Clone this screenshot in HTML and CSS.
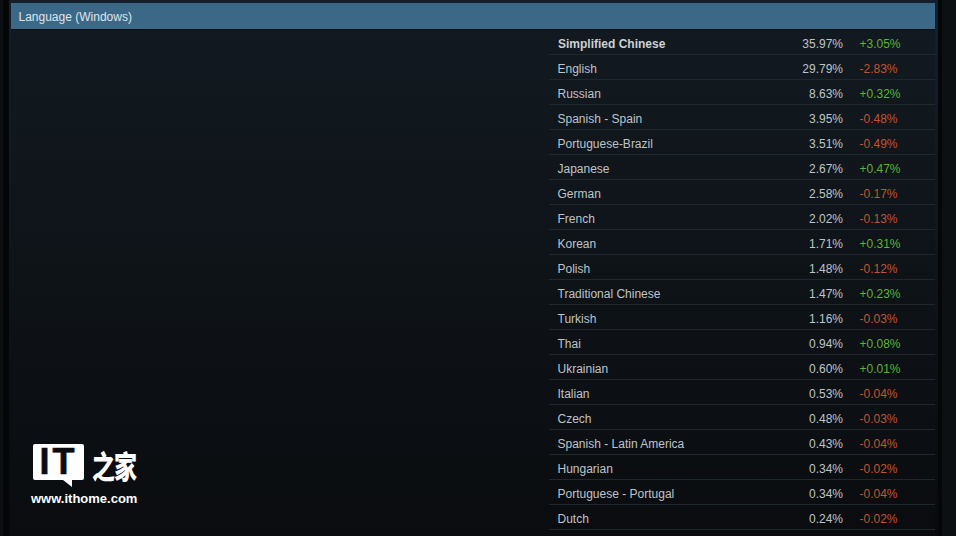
FILE: index.html
```html
<!DOCTYPE html>
<html lang="en">
<head>
<meta charset="utf-8">
<title>Language (Windows)</title>
<link rel="stylesheet" href="styles.css">
</head>
<body>
<div class="frame">
<main class="panel">
  <header class="panel-head">Language (Windows)</header>
  <section class="panel-body">
    <div class="logo">
      <div class="logo-mark">
        <div class="bubble"><span class="bubble-text">IT</span></div>
        <span class="logo-cn">之家</span>
      </div>
      <div class="logo-url">www.ithome.com</div>
    </div>
    <div class="table">
      <div class="row top"><span class="name">Simplified Chinese</span><span class="pct">35.97%</span><span class="chg up">+3.05%</span></div>
      <div class="row"><span class="name">English</span><span class="pct">29.79%</span><span class="chg down">-2.83%</span></div>
      <div class="row"><span class="name">Russian</span><span class="pct">8.63%</span><span class="chg up">+0.32%</span></div>
      <div class="row"><span class="name">Spanish - Spain</span><span class="pct">3.95%</span><span class="chg down">-0.48%</span></div>
      <div class="row"><span class="name">Portuguese-Brazil</span><span class="pct">3.51%</span><span class="chg down">-0.49%</span></div>
      <div class="row"><span class="name">Japanese</span><span class="pct">2.67%</span><span class="chg up">+0.47%</span></div>
      <div class="row"><span class="name">German</span><span class="pct">2.58%</span><span class="chg down">-0.17%</span></div>
      <div class="row"><span class="name">French</span><span class="pct">2.02%</span><span class="chg down">-0.13%</span></div>
      <div class="row"><span class="name">Korean</span><span class="pct">1.71%</span><span class="chg up">+0.31%</span></div>
      <div class="row"><span class="name">Polish</span><span class="pct">1.48%</span><span class="chg down">-0.12%</span></div>
      <div class="row"><span class="name">Traditional Chinese</span><span class="pct">1.47%</span><span class="chg up">+0.23%</span></div>
      <div class="row"><span class="name">Turkish</span><span class="pct">1.16%</span><span class="chg down">-0.03%</span></div>
      <div class="row"><span class="name">Thai</span><span class="pct">0.94%</span><span class="chg up">+0.08%</span></div>
      <div class="row"><span class="name">Ukrainian</span><span class="pct">0.60%</span><span class="chg up">+0.01%</span></div>
      <div class="row"><span class="name">Italian</span><span class="pct">0.53%</span><span class="chg down">-0.04%</span></div>
      <div class="row"><span class="name">Czech</span><span class="pct">0.48%</span><span class="chg down">-0.03%</span></div>
      <div class="row"><span class="name">Spanish - Latin America</span><span class="pct">0.43%</span><span class="chg down">-0.04%</span></div>
      <div class="row"><span class="name">Hungarian</span><span class="pct">0.34%</span><span class="chg down">-0.02%</span></div>
      <div class="row"><span class="name">Portuguese - Portugal</span><span class="pct">0.34%</span><span class="chg down">-0.04%</span></div>
      <div class="row"><span class="name">Dutch</span><span class="pct">0.24%</span><span class="chg down">-0.02%</span></div>
    </div>
  </section>
</main>
</div>
</body>
</html>
```
FILE: styles.css
```css
html, body {
  margin: 0;
  height: 100%;
  overflow: hidden;
}
body {
  background: #0c1013;
  padding: 0 14px 0 3px;
  box-sizing: border-box;
  font-family: "Liberation Sans", Arial, sans-serif;
  font-size: 12px;
}
.frame {
  height: 536px;
  box-sizing: border-box;
  padding: 3px 3px 0 2px;
  border-left: 6px solid #050608;
  border-right: 4px solid #050608;
  background: linear-gradient(180deg, #13202b 0, #080a0d 100%);
}
.panel {
  display: flex;
  flex-direction: column;
  height: 533px;
  background: linear-gradient(180deg, #121a21 0, #0a0c0f 100%);
}
.panel-head {
  height: 26px;
  line-height: 28px;
  padding-left: 7.5px;
  background: #3c6888;
  border-bottom: 1px solid #0a0f14;
  color: #dfe5ea;
}
.panel-body {
  flex: 1;
  position: relative;
  display: flex;
  justify-content: flex-end;
}
.table {
  width: 386px;
}
.row {
  display: flex;
  align-items: center;
  height: 20px;
  padding: 4px 0 0 8.5px;
  border-bottom: 1px solid #20282f;
  color: #bfc4c9;
  line-height: 20px;
}
.row.top .name {
  font-weight: 700;
  color: #ccd1d6;
  margin-left: 0.5px;
}
.name {
  flex: 1;
}
.pct {
  width: 60px;
  text-align: right;
}
.chg {
  width: 92px;
  padding-left: 16.5px;
  box-sizing: border-box;
}
.up {
  color: #5cb436;
}
.down {
  color: #c4532f;
}
.logo {
  position: absolute;
  left: 22px;
  top: 414px;
  width: 108px;
}
.logo-mark {
  display: flex;
  align-items: flex-start;
  gap: 8px;
}
.bubble {
  position: relative;
  flex: none;
  width: 51px;
  height: 36px;
  background: #fff;
  border-radius: 2px;
  display: flex;
  align-items: center;
  justify-content: center;
}
.bubble::after {
  content: "";
  position: absolute;
  right: 12px;
  bottom: -7px;
  border-style: solid;
  border-width: 7px 0 0 9px;
  border-color: #fff transparent transparent transparent;
}
.bubble-text {
  color: #0a0c10;
  font-size: 36px;
  line-height: 36px;
  font-weight: 700;
  letter-spacing: 3px;
  -webkit-text-stroke: 0.6px #0a0c10;
}
.logo-cn {
  margin-top: 4px;
  color: #fff;
  font-family: "Noto Sans CJK SC", sans-serif;
  font-weight: 900;
  font-size: 23px;
  line-height: 34px;
  letter-spacing: -1px;
  white-space: nowrap;
  transform: scaleY(1.35);
}
.logo-url {
  margin: 9px 0 0 -2px;
  color: #fff;
  font-size: 13px;
  line-height: 15px;
  font-weight: 700;
  white-space: nowrap;
}
```
